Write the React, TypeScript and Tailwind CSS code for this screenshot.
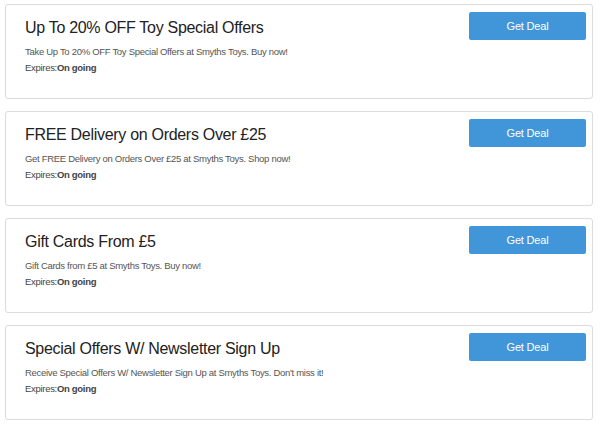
import React from 'react';

const deals = [
  {
    title: 'Up To 20% OFF Toy Special Offers',
    desc: 'Take Up To 20% OFF Toy Special Offers at Smyths Toys. Buy now!',
  },
  {
    title: 'FREE Delivery on Orders Over £25',
    desc: 'Get FREE Delivery on Orders Over £25 at Smyths Toys. Shop now!',
  },
  {
    title: 'Gift Cards From £5',
    desc: 'Gift Cards from £5 at Smyths Toys. Buy now!',
  },
  {
    title: 'Special Offers W/ Newsletter Sign Up',
    desc: "Receive Special Offers W/ Newsletter Sign Up at Smyths Toys. Don't miss it!",
  },
];

const App = () => {
  return (
    <div
      className="min-h-screen bg-white pt-1 pl-[5px] pr-[7px]"
      style={{ fontFamily: '"Liberation Sans", Arial, sans-serif' }}>
      {deals.map((deal) => (
        <div
          key={deal.title}
          className="mb-3 flex h-[95px] justify-between rounded-[3px] border border-[#dcdcdc] bg-white">
          <div className="pt-[12px] pl-[19px]">
            <h2 className="text-[16px] leading-[21px] tracking-[-0.3px] text-[#222]">{deal.title}</h2>
            <p className="mt-[7px] text-[9.5px] leading-[14px] tracking-[-0.3px] text-[#555]">
              {deal.desc}
            </p>
            <p className="mt-[2px] text-[9.5px] leading-[14px] tracking-[-0.3px] text-[#444]">
              Expires:<span className="font-semibold">On going</span>
            </p>
          </div>
          <div className="pt-[7px] pr-[6px]">
            <button
              type="button"
              className="h-[28px] w-[117px] rounded-[2px] bg-[#4196d9] text-[11px] tracking-[-0.2px] text-white">
              Get Deal
            </button>
          </div>
        </div>
      ))}
    </div>
  );
};

export default App;
